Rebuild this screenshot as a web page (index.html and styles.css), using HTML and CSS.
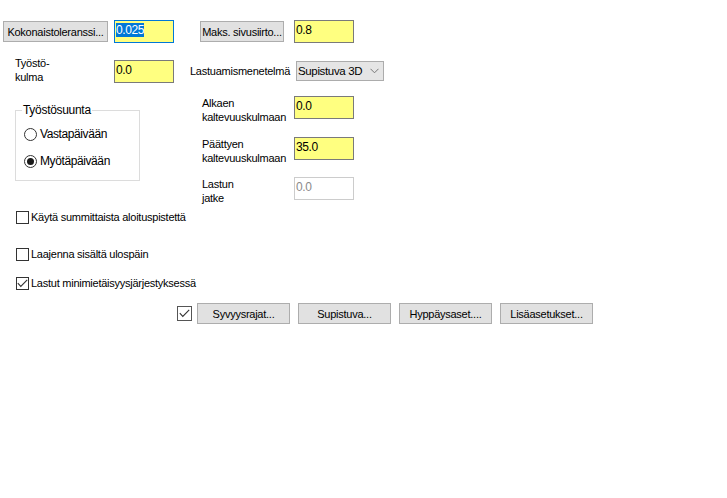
FILE: index.html
```html
<!DOCTYPE html>
<html>
<head>
<meta charset="utf-8">
<link rel="stylesheet" href="styles.css">
</head>
<body>
<div class="dlg">
  <div class="row row1">
    <div class="btn btn-tol">Kokonaistoleranssi...</div>
    <div class="field field-focus field-a"><span class="sel">0.025</span></div>
    <div class="btn btn-maks">Maks. sivusiirto...</div>
    <div class="field field-b">0.8</div>
  </div>
  <div class="row row2">
    <div class="lbl lbl-kulma">Työstö-<br>kulma</div>
    <div class="field field-c">0.0</div>
    <div class="lbl lbl-menet">Lastuamismenetelmä</div>
    <div class="select">
      <span>Supistuva 3D</span>
      <svg class="chev" width="9" height="6" viewBox="0 0 9 6"><path d="M0.5 0.8 L4.5 4.8 L8.5 0.8" fill="none" stroke="#777" stroke-width="1"/></svg>
    </div>
  </div>
  <div class="mid">
    <div class="leftcol">
      <div class="group">
        <span class="legend">Työstösuunta</span>
        <div class="radio"><span class="rb"></span><span>Vastapäivään</span></div>
        <div class="radio radio2"><span class="rb on"></span><span>Myötäpäivään</span></div>
      </div>
    </div>
    <div class="rightcol">
      <div class="pair">
        <div class="lbl plbl">Alkaen<br>kaltevuuskulmaan</div>
        <div class="field">0.0</div>
      </div>
      <div class="pair pair2">
        <div class="lbl plbl">Päättyen<br>kaltevuuskulmaan</div>
        <div class="field">35.0</div>
      </div>
      <div class="pair pair3">
        <div class="lbl plbl">Lastun<br>jatke</div>
        <div class="field field-dis">0.0</div>
      </div>
    </div>
  </div>
  <div class="checks">
    <div class="chk chk1"><span class="cb"></span><span>Käytä summittaista aloituspistettä</span></div>
    <div class="chk chk2"><span class="cb"></span><span>Laajenna sisältä ulospäin</span></div>
    <div class="chk chk3"><span class="cb"><svg width="11" height="9" viewBox="0 0 11 9"><path d="M0.8 4.2 L3.8 7.4 L10.2 0.8" fill="none" stroke="#333" stroke-width="1.1"/></svg></span><span>Lastut minimietäisyysjärjestyksessä</span></div>
  </div>
  <div class="row bottom">
    <span class="cb cb-big"><svg width="11" height="9" viewBox="0 0 11 9"><path d="M0.8 4.2 L3.8 7.4 L10.2 0.8" fill="none" stroke="#333" stroke-width="1.1"/></svg></span>
    <div class="btn bbtn">Syvyysrajat...</div>
    <div class="btn bbtn">Supistuva...</div>
    <div class="btn bbtn">Hyppäysaset....</div>
    <div class="btn bbtn">Lisäasetukset...</div>
  </div>
</div>
</body>
</html>
```
FILE: styles.css
```css
html, body {
  margin: 0;
  padding: 0;
  background: #ffffff;
}
body {
  font-family: "Liberation Sans", Arial, sans-serif;
  font-size: 11px;
  letter-spacing: -0.25px;
  color: #000;
}
.dlg {
  padding-top: 20px;
  width: 727px;
  height: 478px;
}
.row {
  display: flex;
  align-items: center;
}
.row1 {
  height: 23px;
}
.btn {
  box-sizing: border-box;
  height: 21px;
  background: #e1e1e1;
  border: 1px solid #adadad;
  display: flex;
  align-items: center;
  justify-content: center;
  white-space: nowrap;
  flex: none;
}
.btn-tol {
  margin-left: 3px;
  width: 105px;
}
.btn-maks {
  margin-left: 26px;
  width: 84px;
}
.field {
  box-sizing: border-box;
  width: 60px;
  height: 23px;
  background: #ffff80;
  border: 1px solid #7a7a7a;
  padding: 3px 0 0 1px;
  line-height: 13px;
  flex: none;
  font-size: 12px;
  letter-spacing: -0.4px;
}
.field-a {
  margin-left: 6px;
}
.field-b {
  margin-left: 10px;
}
.field-focus {
  border-color: #0078d7;
}
.sel {
  background: #0078d7;
  color: #fff;
}
.row2 {
  margin-top: 17px;
  height: 23px;
}
.lbl {
  line-height: 14px;
  white-space: nowrap;
}
.lbl-kulma {
  box-sizing: border-box;
  width: 114px;
  padding-left: 15px;
  margin-top: -3px;
  flex: none;
}
.lbl-menet {
  margin-left: 16px;
  width: 106px;
  margin-top: -1px;
  flex: none;
}
.select {
  box-sizing: border-box;
  width: 88px;
  height: 20px;
  background: #e5e5e5;
  border: 1px solid #acacac;
  display: flex;
  align-items: center;
  justify-content: space-between;
  padding: 0 4px 0 1px;
  margin-top: -1px;
  white-space: nowrap;
  font-size: 11.5px;
  letter-spacing: -0.35px;
  flex: none;
}
.chev {
  display: block;
}
.mid {
  display: flex;
  margin-top: 13px;
}
.leftcol {
  width: 202px;
  box-sizing: border-box;
  padding-left: 15px;
  padding-top: 14px;
  flex: none;
}
.group {
  box-sizing: border-box;
  width: 125px;
  height: 71px;
  border: 1px solid #dcdcdc;
  padding-left: 8px;
}
.legend {
  display: block;
  width: max-content;
  background: #fff;
  margin-top: -7px;
  margin-left: -2px;
  padding: 0 1px;
  line-height: 13px;
  font-size: 12px;
  letter-spacing: -0.3px;
}
.radio {
  display: flex;
  align-items: center;
  gap: 3px;
  margin-top: 10px;
  height: 14px;
  font-size: 12px;
  letter-spacing: -0.4px;
}
.radio2 {
  margin-top: 13px;
}
.rb {
  box-sizing: border-box;
  width: 13px;
  height: 13px;
  border: 1px solid #333;
  border-radius: 50%;
  background: #fff;
  display: flex;
  align-items: center;
  justify-content: center;
  flex: none;
}
.rb.on::after {
  content: "";
  width: 7px;
  height: 7px;
  border-radius: 50%;
  background: #1a1a1a;
}
.rightcol {
  display: flex;
  flex-direction: column;
}
.pair {
  display: flex;
  align-items: flex-start;
  height: 23px;
}
.pair2 {
  margin-top: 18px;
}
.pair3 {
  margin-top: 17px;
}
.plbl {
  width: 92px;
  padding-top: 0;
  line-height: 14px;
  flex: none;
}
.field-dis {
  background: #fff;
  border-color: #cccccc;
  color: #8a8a8a;
}
.checks {
  display: flex;
  flex-direction: column;
}
.chk {
  display: flex;
  align-items: center;
  gap: 2px;
  padding-left: 16px;
  height: 14px;
}
.chk1 {
  margin-top: 10px;
}
.chk2 {
  margin-top: 23px;
}
.chk3 {
  margin-top: 15px;
}
.cb {
  box-sizing: border-box;
  width: 13px;
  height: 13px;
  border: 1px solid #333;
  background: #fff;
  display: flex;
  align-items: center;
  justify-content: center;
  flex: none;
}
.bottom {
  margin-top: 13px;
  height: 21px;
  padding-left: 177px;
}
.cb-big {
  width: 15px;
  height: 15px;
  border-color: #555;
  margin-right: 5px;
}
.bbtn {
  width: 93px;
  margin-right: 8px;
}
```
